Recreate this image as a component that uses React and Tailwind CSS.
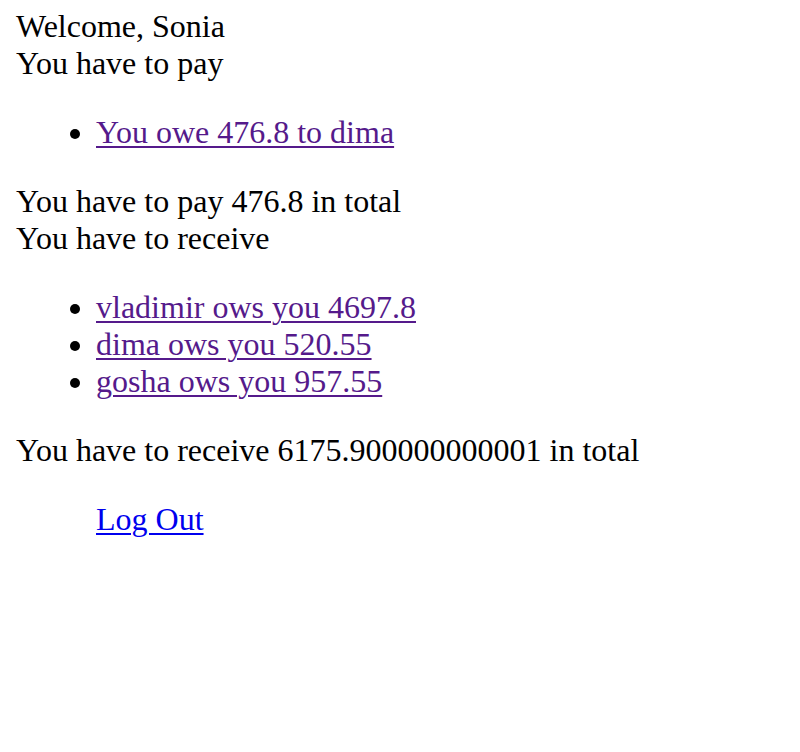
export default function App() {
  const receive = [
    'vladimir ows you 4697.8',
    'dima ows you 520.55',
    'gosha ows you 957.55',
  ]
  const link = 'text-[#551A8B] underline decoration-2 underline-offset-[3px]'

  return (
    <div className="mx-4 mt-2 mb-4 font-['Liberation_Serif',serif] text-[32px] leading-[37px] text-black bg-white">
      <div>Welcome, Sonia</div>
      <div>You have to pay</div>
      <ul className="my-8 pl-20 list-disc">
        <li>
          <a href="#" className={link}>You owe 476.8 to dima</a>
        </li>
      </ul>
      <div>You have to pay 476.8 in total</div>
      <div>You have to receive</div>
      <ul className="my-8 pl-20 list-disc">
        {receive.map((r) => (
          <li key={r}>
            <a href="#" className={link}>{r}</a>
          </li>
        ))}
      </ul>
      <div>You have to receive 6175.900000000001 in total</div>
      <div className="mt-8 ml-20">
        <a href="#" className="text-[#0000EE] underline decoration-2 underline-offset-[3px]">Log Out</a>
      </div>
    </div>
  )
}
